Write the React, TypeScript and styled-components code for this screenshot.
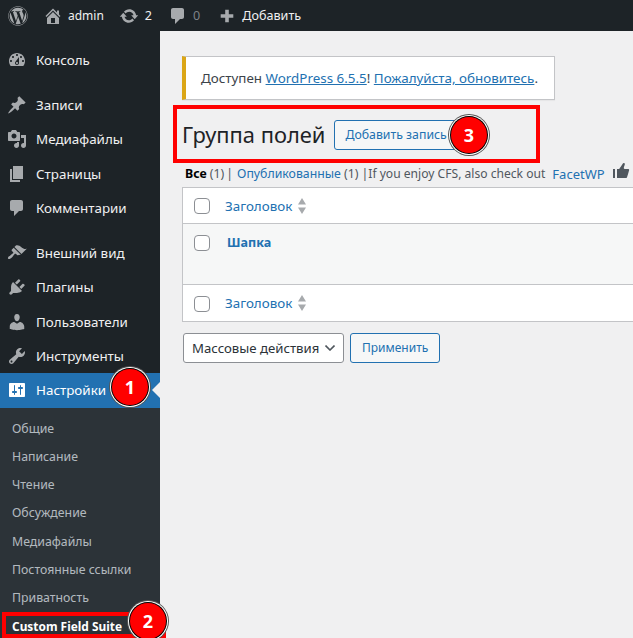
import React from "react";
import styled, { createGlobalStyle } from "styled-components";
import { FaWordpress } from "react-icons/fa";

const GlobalStyle = createGlobalStyle`
  html, body {
    margin: 0;
    padding: 0;
    background: #f0f0f1;
  }
  body {
    font-family: "Noto Sans", sans-serif;
    font-size: 12.3px;
    line-height: 18px;
    color: #3c434a;
  }
`;

const PATHS = {
  dashboard:
    "M3.76 16h12.48c1.1-1.37 1.76-3.11 1.76-5 0-4.42-3.58-8-8-8s-8 3.58-8 8c0 1.89.66 3.63 1.76 5zM10 4c.55 0 1 .45 1 1s-.45 1-1 1-1-.45-1-1 .45-1 1-1zM6 6c.55 0 1 .45 1 1s-.45 1-1 1-1-.45-1-1 .45-1 1-1zm8 0c.55 0 1 .45 1 1s-.45 1-1 1-1-.45-1-1 .45-1 1-1zm-5.37 5.55L12 7v6c0 1.1-.9 2-2 2s-2-.9-2-2c0-.57.24-1.08.63-1.45zM4 10c.55 0 1 .45 1 1s-.45 1-1 1-1-.45-1-1 .45-1 1-1zm12 0c.55 0 1 .45 1 1s-.45 1-1 1-1-.45-1-1 .45-1 1-1zm-5 3c0-.55-.45-1-1-1s-1 .45-1 1 .45 1 1 1 1-.45 1-1z",
  post: "M10.44 3.02l1.82-1.82 6.36 6.35-1.83 1.82c-1.05-.68-2.48-.57-3.41.36l-.75.75c-.92.93-1.04 2.35-.35 3.41l-1.83 1.82-2.41-2.41-2.8 2.79c-.42.42-3.38 2.71-3.8 2.29s1.86-3.39 2.28-3.81l2.79-2.79L4.1 9.36l1.83-1.82c1.05.69 2.48.57 3.4-.36l.75-.75c.93-.92 1.05-2.35.36-3.41z",
  media:
    "M13 11V4c0-.55-.45-1-1-1h-1.67L9 1H5L3.67 3H2c-.55 0-1 .45-1 1v7c0 .55.45 1 1 1h10c.55 0 1-.45 1-1zM7 4.5c1.38 0 2.5 1.12 2.5 2.5S8.38 9.5 7 9.5 4.5 8.38 4.5 7 5.62 4.5 7 4.5zM14 6h5v10.5c0 1.38-1.12 2.5-2.5 2.5S14 17.88 14 16.5s1.12-2.5 2.5-2.5c.17 0 .34.02.5.05V9h-3V6zm-4 8.05V13h2v3.5c0 1.38-1.12 2.5-2.5 2.5S7 17.88 7 16.5 8.12 14 9.5 14c.17 0 .34.02.5.05z",
  page: "M6 15V2h10v13H6zm-1 1h8v2H3V5h2v11z",
  comment:
    "M5 2h9c1.1 0 2 .9 2 2v7c0 1.1-.9 2-2 2h-2l-5 5v-5H5c-1.1 0-2-.9-2-2V4c0-1.1.9-2 2-2z",
  appearance:
    "M14.48 11.06L7.41 3.99l1.5-1.5c.5-.56 2.3-.47 3.51.32 1.21.8 1.43 1.28 2.91 2.1 1.18.64 2.45 1.26 4.45.85zm-.71.71L6.7 4.7 4.93 6.47c-.39.39-.39 1.02 0 1.41l1.06 1.06c.39.39.39 1.03 0 1.42-.6.6-1.43 1.11-2.21 1.69-.35.26-.7.53-1.01.84C1.43 13.23.4 14.98 1.2 15.8c.8.81 2.57-.23 3.91-1.57.31-.31.58-.66.85-1.01.57-.78 1.08-1.61 1.69-2.21.39-.39 1.02-.39 1.41 0l1.06 1.06c.39.39 1.02.39 1.41 0z",
  plugin:
    "M13.11 4.36L9.87 7.6 8 5.73l3.24-3.24c.35-.34 1.05-.2 1.56.32.52.51.66 1.21.31 1.55zm-8 1.77l.91-1.12 9.01 9.01-1.19.84c-.71.71-2.63 1.16-3.82 1.16H6.14L4.9 17.26c-.59.59-1.54.59-2.12 0-.59-.58-.59-1.53 0-2.12l1.24-1.24v-3.88c0-1.13.4-3.19 1.09-3.89zm7.26 3.97l3.24-3.24c.34-.35 1.04-.21 1.55.31.52.51.66 1.21.31 1.55l-3.24 3.25z",
  users:
    "M10 9.25c-2.27 0-2.73-3.44-2.73-3.44C7 4.02 7.82 2 9.97 2c2.16 0 2.98 2.02 2.71 3.81 0 0-.41 3.44-2.68 3.44zm0 2.57L12.72 10c2.39 0 4.52 2.33 4.52 4.53v2.49s-3.65 1.13-7.24 1.13c-3.65 0-7.24-1.13-7.24-1.13v-2.49c0-2.25 1.94-4.48 4.47-4.48z",
  tools:
    "M16.68 9.77c-1.34 1.34-3.3 1.67-4.95.99l-5.41 6.52c-.99.99-2.59.99-3.58 0s-.99-2.59 0-3.57l6.52-5.42c-.68-1.65-.35-3.61.99-4.95 1.28-1.28 3.12-1.62 4.72-1.06l-2.89 2.89 2.82 2.82 2.86-2.87c.53 1.58.18 3.39-1.08 4.65zM3.81 16.21c.4.39 1.04.39 1.43 0 .4-.4.4-1.04 0-1.43-.39-.4-1.03-.4-1.43 0-.39.39-.39 1.03 0 1.43z",
  settings:
    "M18 16V4c0-.55-.45-1-1-1H3c-.55 0-1 .45-1 1v12c0 .55.45 1 1 1h14c.55 0 1-.45 1-1zM8 11h1c.55 0 1 .45 1 1s-.45 1-1 1H8v1.5c0 .28-.22.5-.5.5s-.5-.22-.5-.5V13H6c-.55 0-1-.45-1-1s.45-1 1-1h1V5.5c0-.28.22-.5.5-.5s.5.22.5.5V11zm5-2h-1c-.55 0-1-.45-1-1s.45-1 1-1h1V5.5c0-.28.22-.5.5-.5s.5.22.5.5V7h1c.55 0 1 .45 1 1s-.45 1-1 1h-1v5.5c0 .28-.22.5-.5.5s-.5-.22-.5-.5V9z",
  home: "M16 8.5l1.53 1.53-1.06 1.06L10 4.62l-6.47 6.47-1.06-1.06L10 2.5l4 4v-2h2v4zm-6-2.46l6 5.99V18H4v-5.97zM12 17v-5H8v5h4z",
  update:
    "M10.2 3.28c3.53 0 6.43 2.61 6.92 6h2.08l-3.5 4-3.5-4h2.32c-.45-1.97-2.21-3.45-4.32-3.45-1.45 0-2.73.71-3.54 1.78L4.95 5.66C6.23 4.2 8.11 3.28 10.2 3.28zm-.4 13.44c-3.52 0-6.43-2.61-6.92-6H.8l3.5-4c1.17 1.33 2.33 2.67 3.5 4H5.48c.45 1.97 2.21 3.45 4.32 3.45 1.45 0 2.73-.71 3.54-1.78l1.71 1.95c-1.28 1.46-3.15 2.38-5.25 2.38z",
  plus: "M17 8v4h-5v5H8v-5H3V8h5V3h4v5h5z",
  thumb:
    "M12.72 2c.15-.02.26.02.41.07.56.19.83.79.66 1.35-.17.55-1 3.04-1 3.58 0 .53.75 1 1.35 1h3c.6 0 1 .4 1 1s-2 7-2 7c-.17.39-.55 1-1 1H6V8h2.14c.41-.41 3.3-4.71 3.58-5.27.21-.41.6-.68 1-.73zM2 8h2v9H2V8z",
};

type IconName = keyof typeof PATHS;

const Glyph = styled.svg<{ $size?: number; $color?: string }>`
  display: block;
  flex: none;
  width: ${(p) => p.$size ?? 20}px;
  height: ${(p) => p.$size ?? 20}px;
  fill: ${(p) => p.$color ?? "#a7aaad"};
`;

const Icon = (props: { name: IconName; size?: number; color?: string }) => (
  <Glyph viewBox="0 0 20 20" $size={props.size} $color={props.color}>
    <path d={PATHS[props.name]} />
  </Glyph>
);

const Page = styled.div`
  position: relative;
  width: 633px;
  height: 638px;
  overflow: hidden;
  background: #f0f0f1;
`;

const AdminBar = styled.header`
  display: flex;
  align-items: center;
  height: 31px;
  padding-left: 8px;
  font-size: 12.6px;
  background: #1d2327;
  color: #f0f0f1;
`;

const BarLogo = styled(FaWordpress)`
  flex: none;
  width: 20px;
  height: 20px;
  color: #a7aaad;
  margin-right: 15px;
`;

const BarItem = styled.div<{ $gap: number; $after: number }>`
  display: flex;
  align-items: center;
  gap: ${(p) => p.$gap}px;
  margin-right: ${(p) => p.$after}px;
`;

const BarUser = styled.span`
  font-size: 12px;
`;

const BarCount = styled.span<{ $dim?: boolean }>`
  color: ${(p) => (p.$dim ? "#7d8287" : "#f0f0f1")};
`;

const Body = styled.div`
  display: flex;
  height: 607px;
`;

const Sidebar = styled.nav`
  flex: none;
  width: 160px;
  background: #1d2327;
  padding-top: 12px;
  box-sizing: border-box;
`;

const MenuRow = styled.div<{ $current?: boolean; $gapBefore?: boolean }>`
  position: relative;
  display: flex;
  align-items: center;
  height: 34.4px;
  padding-left: 7px;
  margin-top: ${(p) => (p.$gapBefore ? "10.4px" : "0")};
  gap: 9px;
  font-size: 13.4px;
  color: ${(p) => (p.$current ? "#fff" : "#f0f0f1")};
  background: ${(p) => (p.$current ? "#2271b1" : "transparent")};
  ${(p) =>
    p.$current &&
    `
    &::after {
      content: "";
      position: absolute;
      right: 0;
      top: 50%;
      margin-top: -8px;
      border: 8px solid transparent;
      border-right-color: #f0f0f1;
      border-left-width: 0;
    }
  `}
`;

const Submenu = styled.div`
  background: #2c3338;
  padding-top: 7px;
  height: 230px;
`;

const SubItem = styled.div<{ $current?: boolean }>`
  display: flex;
  align-items: center;
  height: 28.2px;
  padding-left: 12px;
  white-space: nowrap;
  font-size: ${(p) => (p.$current ? "11.9px" : "12.3px")};
  color: ${(p) => (p.$current ? "#fff" : "rgba(240, 246, 252, 0.7)")};
  font-weight: ${(p) => (p.$current ? 700 : 400)};
`;

const Main = styled.main`
  flex: 1;
  min-width: 0;
  overflow: hidden;
  padding: 25px 0 0 22px;
`;

const Notice = styled.div`
  display: flex;
  align-items: center;
  box-sizing: border-box;
  width: 373px;
  height: 44px;
  padding-left: 15px;
  font-size: 13.4px;
  background: #fff;
  border: 1px solid #c3c4c7;
  border-left: 4px solid #dba617;
  box-shadow: 0 1px 1px rgba(0, 0, 0, 0.04);
`;

const Link = styled.a`
  color: #2271b1;
  text-decoration: underline;
`;

const HeadingRow = styled.div`
  display: flex;
  align-items: center;
  margin: 20px 0 0;
  height: 30px;
`;

const Heading = styled.h1`
  margin: 0 9px 0 0;
  font-size: 21.9px;
  font-weight: 400;
  line-height: 30px;
  white-space: nowrap;
  color: #1d2327;
`;

const OutlineButton = styled.button<{ $width: number; $pad: number; $size: number }>`
  box-sizing: border-box;
  flex: none;
  width: ${(p) => p.$width}px;
  height: 30px;
  padding: 0 0 0 ${(p) => p.$pad}px;
  text-align: left;
  font: inherit;
  font-size: ${(p) => p.$size}px;
  color: #2271b1;
  background: #f6f7f7;
  border: 1px solid #2271b1;
  border-radius: 3px;
`;

const Filters = styled.div`
  display: flex;
  align-items: center;
  height: 37px;
  padding: 10px 0 0 3px;
  box-sizing: border-box;
  white-space: nowrap;
  color: #50575e;
`;

const FilterLink = styled.span<{ $bold?: boolean; $left?: number }>`
  margin-left: ${(p) => p.$left ?? 0}px;
  color: ${(p) => (p.$bold ? "#000" : "#2271b1")};
  font-weight: ${(p) => (p.$bold ? 700 : 400)};
`;

const FilterText = styled.span<{ $left?: number }>`
  white-space: pre;
  margin-left: ${(p) => p.$left ?? 0}px;
`;

const Promo = styled(FilterText)`
  font-size: 12.1px;
`;

const PromoLink = styled(FilterLink)`
  font-size: 13px;
`;

const ThumbSlot = styled.span`
  display: inline-flex;
  margin: -6px 0 0 6px;
`;

const Table = styled.div`
  width: 600px;
  background: #fff;
  border: 1px solid #c3c4c7;
`;

const TableRow = styled.div<{ $height: number; $tall?: boolean; $shaded?: boolean; $divided?: boolean }>`
  display: flex;
  align-items: ${(p) => (p.$tall ? "flex-start" : "center")};
  box-sizing: border-box;
  height: ${(p) => p.$height}px;
  padding: ${(p) => (p.$tall ? "10px" : "0")} 0 0 11px;
  background: ${(p) => (p.$shaded ? "#f6f7f7" : "#fff")};
  border-top: ${(p) => (p.$divided ? "1px solid #c3c4c7" : "0")};
`;

const Checkbox = styled.span`
  flex: none;
  box-sizing: border-box;
  width: 16px;
  height: 16px;
  margin-top: 1px;
  background: #fff;
  border: 1px solid #8c8f94;
  border-radius: 4px;
`;

const ColumnTitle = styled.span`
  margin-left: 15px;
  font-size: 13.4px;
  color: #2271b1;
`;

const SortArrows = styled.svg`
  display: block;
  width: 10px;
  height: 16px;
  margin-left: 5px;
  fill: #a7aaad;
`;

const RowTitle = styled.strong`
  margin: 1px 0 0 17px;
  font-size: 12.6px;
  line-height: 16px;
  color: #2271b1;
`;

const Actions = styled.div`
  display: flex;
  gap: 6px;
  margin: 11px 0 0 1px;
`;

const Select = styled.div`
  display: flex;
  align-items: center;
  justify-content: space-between;
  box-sizing: border-box;
  width: 161px;
  height: 30px;
  padding: 0 8px;
  font-size: 13.2px;
  color: #2c3338;
  background: #fff;
  border: 1px solid #8c8f94;
  border-radius: 3px;
`;

const Chevron = styled.svg`
  display: block;
  flex: none;
  width: 10px;
  height: 6px;
  fill: none;
  stroke: #50575e;
  stroke-width: 1.6;
`;

const RedBox = styled.div<{ $x: number; $y: number; $w: number; $h: number }>`
  position: absolute;
  left: ${(p) => p.$x}px;
  top: ${(p) => p.$y}px;
  width: ${(p) => p.$w}px;
  height: ${(p) => p.$h}px;
  box-sizing: border-box;
  border: 4px solid #f00;
`;

const Badge = styled.div<{ $x: number; $y: number }>`
  position: absolute;
  left: ${(p) => p.$x - 18}px;
  top: ${(p) => p.$y - 18}px;
  display: flex;
  align-items: center;
  justify-content: center;
  width: 36px;
  height: 36px;
  border-radius: 50%;
  background: #f00;
  color: #fff;
  font-size: 18px;
  font-weight: 700;
  box-shadow: 0 0 0 1px #000, 0 0 0 2px #fff, 0 0 0 3px #555;
`;

const MENU: { label: string; icon: IconName; gapBefore?: boolean }[] = [
  { label: "Консоль", icon: "dashboard" },
  { label: "Записи", icon: "post", gapBefore: true },
  { label: "Медиафайлы", icon: "media" },
  { label: "Страницы", icon: "page" },
  { label: "Комментарии", icon: "comment" },
  { label: "Внешний вид", icon: "appearance", gapBefore: true },
  { label: "Плагины", icon: "plugin" },
  { label: "Пользователи", icon: "users" },
  { label: "Инструменты", icon: "tools" },
];

const SUBMENU = [
  "Общие",
  "Написание",
  "Чтение",
  "Обсуждение",
  "Медиафайлы",
  "Постоянные ссылки",
  "Приватность",
];

const Sort = () => (
  <SortArrows viewBox="0 0 10 16">
    <path d="M5 0l4 6.5H1zM5 16L1 9.5h8z" />
  </SortArrows>
);

const App = () => (
  <Page>
    <GlobalStyle />
    <AdminBar>
      <BarLogo />
      <BarItem $gap={5} $after={15}>
        <Icon name="home" size={20} />
        <BarUser>admin</BarUser>
      </BarItem>
      <BarItem $gap={6} $after={16}>
        <Icon name="update" size={20} />
        <BarCount>2</BarCount>
      </BarItem>
      <BarItem $gap={5} $after={18}>
        <Icon name="comment" size={20} />
        <BarCount $dim>0</BarCount>
      </BarItem>
      <BarItem $gap={6} $after={0}>
        <Icon name="plus" size={18} />
        Добавить
      </BarItem>
    </AdminBar>
    <Body>
      <Sidebar>
        {MENU.map((item) => (
          <MenuRow key={item.label} $gapBefore={item.gapBefore}>
            <Icon name={item.icon} />
            {item.label}
          </MenuRow>
        ))}
        <MenuRow $current>
          <Icon name="settings" color="#fff" />
          Настройки
        </MenuRow>
        <Submenu>
          {SUBMENU.map((label) => (
            <SubItem key={label}>{label}</SubItem>
          ))}
          <SubItem $current>Custom Field Suite</SubItem>
        </Submenu>
      </Sidebar>
      <Main>
        <Notice>
          <span>
            Доступен <Link>WordPress 6.5.5</Link>! <Link>Пожалуйста, обновитесь</Link>.
          </span>
        </Notice>
        <HeadingRow>
          <Heading>Группа полей</Heading>
          <OutlineButton $width={124} $pad={10} $size={12.3}>
            Добавить запись
          </OutlineButton>
        </HeadingRow>
        <Filters>
          <FilterLink $bold>Все</FilterLink>
          <FilterText> (1)</FilterText>
          <FilterText $left={2}>|</FilterText>
          <FilterLink $left={4}>Опубликованные</FilterLink>
          <FilterText> (1)</FilterText>
          <FilterText $left={3}>|</FilterText>
          <Promo $left={0}>If you enjoy CFS, also check out</Promo>
          <PromoLink $left={7}>FacetWP</PromoLink>
          <ThumbSlot>
            <Icon name="thumb" color="#50575e" />
          </ThumbSlot>
        </Filters>
        <Table>
          <TableRow $height={35}>
            <Checkbox />
            <ColumnTitle>Заголовок</ColumnTitle>
            <Sort />
          </TableRow>
          <TableRow $height={61} $tall $shaded $divided>
            <Checkbox />
            <RowTitle>Шапка</RowTitle>
          </TableRow>
          <TableRow $height={37} $divided>
            <Checkbox />
            <ColumnTitle>Заголовок</ColumnTitle>
            <Sort />
          </TableRow>
        </Table>
        <Actions>
          <Select>
            Массовые действия
            <Chevron viewBox="0 0 10 6">
              <path d="M.5.5L5 5 9.500.5" />
            </Chevron>
          </Select>
          <OutlineButton $width={90} $pad={11} $size={12}>
            Применить
          </OutlineButton>
        </Actions>
      </Main>
    </Body>
    <RedBox $x={173} $y={105} $w={367} $h={58} />
    <RedBox $x={2} $y={612} $w={164} $h={26} />
    <Badge $x={130} $y={387}>1</Badge>
    <Badge $x={148} $y={621}>2</Badge>
    <Badge $x={469} $y={135}>3</Badge>
  </Page>
);

export default App;
